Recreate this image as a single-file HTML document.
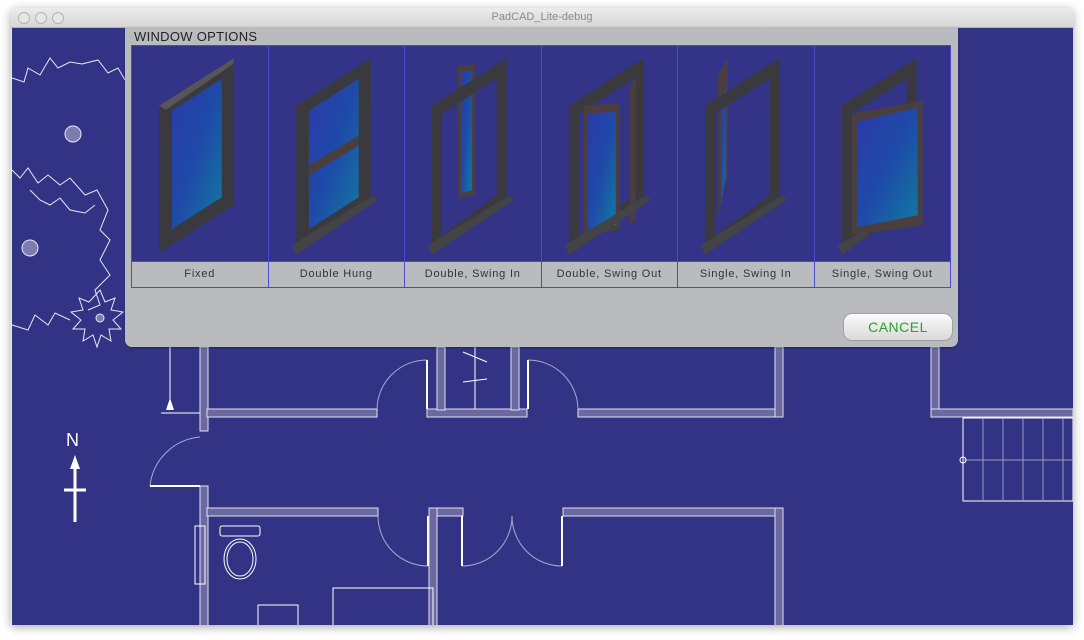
<!DOCTYPE html>
<html><head><meta charset="utf-8"><style>
html,body{margin:0;padding:0;background:#fff;width:1084px;height:640px;overflow:hidden;font-family:"Liberation Sans",sans-serif}
#win{position:absolute;left:11px;top:8px;width:1062px;height:617px;background:#e8e8e8;box-shadow:0 2px 10px rgba(0,0,0,.35);border-radius:5px 5px 0 0;overflow:hidden}
#tb{height:19px;background:linear-gradient(#ececec,#d6d6d6);border-bottom:1px solid #b0b0b0;text-align:center;font-size:11px;line-height:19px;color:#8a8a8a}
.dot{position:absolute;top:4px;width:10px;height:10px;border-radius:50%;border:1px solid #b4b4b4;background:#e6e6e6}
#plan{position:absolute;left:1px;top:20px}
#dlg{position:absolute;left:125px;top:27px;width:833px;height:320px;background:#b9bbbf;border-radius:0 0 7px 7px;box-shadow:0 1px 2px rgba(0,0,0,.3)}
#ttl{position:absolute;left:9px;top:2px;font-size:13px;color:#222;letter-spacing:.3px}
#grid{position:absolute;left:6px;top:18px;width:820px;height:243px;border:1px solid #4a4ad0;box-sizing:border-box;display:flex}
.cell{flex:1 1 0;min-width:0;border-left:1px solid #4a4ad0;display:flex;flex-direction:column;overflow:hidden}
.cell:first-child{border-left:none}
.img{display:block;width:100%;height:216px;background:#333388;border-bottom:1px solid #4a4ad0}
.lbl{flex:1;text-align:center;font-size:11px;line-height:25px;color:#333;letter-spacing:.8px;white-space:nowrap}
#cancel{position:absolute;left:718px;top:286px;width:108px;height:26px;border-radius:9px;border:1px solid #a0a0a0;background:linear-gradient(#fbfbfb,#d9d9d9);color:#2aa02a;font-size:14px;text-align:center;line-height:26px;letter-spacing:.5px}
</style></head><body>
<div id="win">
<div id="tb">PadCAD_Lite-debug</div>
<div class="dot" style="left:7px"></div><div class="dot" style="left:24px"></div><div class="dot" style="left:41px"></div>
<svg id="plan" width="1061" height="597" viewBox="12 28 1061 597">
<rect x="12" y="28" width="1061" height="597" fill="#333386"/>
<g fill="none" stroke="#e8e8f8" stroke-width="1">
<path d="M12,78 L24,82 L28,68 L40,75 L50,58 L58,68 L70,62 L82,64 L98,60 L108,73 L118,68 L125,80"/>
<path d="M12,170 L20,178 L28,168 L38,183 L48,175 L60,185 L70,178 L85,195 L97,190 L108,210 L100,230 L110,240 L100,260 L110,275 L95,290 L100,305 L88,310"/>
<path d="M12,325 L28,330 L35,315 L48,325 L55,313 L70,320"/>
<path d="M30,190 L40,200 L50,205 L60,198 L70,210 L85,213 L95,205"/>
<circle cx="73" cy="134" r="8" fill="#7c7cae"/>
<circle cx="30" cy="248" r="8" fill="#7c7cae"/>
<path d="M100,290 l5,12 l10,-4 l-4,12 l12,2 l-10,8 l8,9 l-12,0 l2,12 l-10,-6 l-4,12 l-4,-12 l-10,6 l2,-12 l-12,0 l8,-9 l-10,-8 l12,-2 l-4,-12 l10,4 z"/>
<circle cx="100" cy="318" r="4" fill="#7c7cae"/>
</g>
<g fill="#6b6aa0" stroke="#e0e0f0" stroke-width="1">
<rect x="200" y="347" width="8" height="84"/>
<rect x="200" y="486" width="8" height="140"/>
<rect x="207" y="409" width="170" height="8"/>
<rect x="427" y="409" width="100" height="8"/>
<rect x="437" y="347" width="8" height="63"/>
<rect x="511" y="347" width="8" height="63"/>
<rect x="578" y="409" width="205" height="8"/>
<rect x="775" y="347" width="8" height="70"/>
<rect x="931" y="347" width="8" height="70"/>
<rect x="931" y="409" width="142" height="8"/>
<rect x="207" y="508" width="171" height="8"/>
<rect x="429" y="508" width="34" height="8"/>
<rect x="563" y="508" width="220" height="8"/>
<rect x="429" y="508" width="8" height="118"/>
<rect x="775" y="508" width="8" height="118"/>
</g>
<g fill="none" stroke="#a8a8d0" stroke-width="1">
<path d="M377,409 A50,50 0 0 1 427,360"/>
<path d="M528,360 A50,50 0 0 1 578,409"/>
<path d="M150,486 A55,55 0 0 1 200,437"/>
<path d="M378,516 A50,50 0 0 0 428,566"/>
<path d="M462,566 A50,50 0 0 0 512,516 A50,50 0 0 0 562,566"/>
</g>
<g stroke="#fff" stroke-width="2" fill="none">
<path d="M427,360 V409 M528,360 V409 M150,486 H200 M428,516 V566 M462,516 V566 M562,516 V566"/>
</g>
<g stroke="#fff" stroke-width="1" fill="none">
<path d="M170,347 V410 M161,413 H200" />
<path d="M463,352 L487,362 M463,382 L487,379 M475,347 V409"/>
<rect x="963" y="418" width="110" height="83"/>
<path d="M983,418 V501 M1003,418 V501 M1023,418 V501 M1043,418 V501 M1063,418 V501 M963,460 H1073" stroke="#9a9ac8"/>
<circle cx="963" cy="460" r="3"/>
<rect x="220" y="526" width="40" height="10" rx="2"/>
<ellipse cx="240" cy="559" rx="16" ry="20"/><ellipse cx="240" cy="559" rx="13" ry="17"/>
<rect x="195" y="526" width="10" height="58"/>
<rect x="333" y="588" width="100" height="40"/>
<rect x="258" y="605" width="40" height="25"/>
</g>
<path d="M170,398 l-4,12 h8 z" fill="#fff"/>
<text x="66" y="446" fill="#fff" font-size="18" font-family="Liberation Sans,sans-serif">N</text>
<path d="M75,455 l-5,14 h10 z" fill="#fff"/>
<path d="M75,465 V522 M64,490 H86" stroke="#fff" stroke-width="3"/>
</svg>
</div>
<svg width="0" height="0" style="position:absolute">
<defs>
<linearGradient id="gl" x1="0" y1="0" x2="1" y2="1"><stop offset="0" stop-color="#2b3aa8"/><stop offset=".5" stop-color="#1e4aa8"/><stop offset="1" stop-color="#127aa0"/></linearGradient>
</defs>
</svg>
<div id="dlg">
<div id="ttl">WINDOW OPTIONS</div>
<div id="grid">
<div class="cell"><svg class="img" viewBox="0 0 136 216">
<path d="M27,60 L102,12 L102,160 L27,208 Z" fill="#3a3a3e"/>
<path d="M40,65 L90,33 L90,152 L40,184 Z" fill="url(#gl)"/>
<path d="M27,60 L95,17 L102,12 L102,18 L34,64 Z" fill="#55555a"/>
</svg><div class="lbl">Fixed</div></div>
<div class="cell"><svg class="img" viewBox="0 0 136 216">
<path d="M27,60 L102,12 L102,160 L27,208 Z" fill="#3a3a3e"/>
<path d="M40,65 L90,33 L90,152 L40,184 Z" fill="url(#gl)"/>
<path d="M40,120 L90,90 L90,100 L40,130 Z" fill="#4a3e3e"/>
<path d="M23,200 L105,150 L109,155 L27,210 Z" fill="#444448"/>
</svg><div class="lbl">Double Hung</div></div>
<div class="cell"><svg class="img" viewBox="0 0 136 216">
<path d="M53,20 L70,18 L70,150 L53,153 Z" fill="#4a3e3e"/>
<path d="M56,26 L67,24 L67,145 L56,148 Z" fill="url(#gl)"/>
<path d="M27,60 L102,12 L102,160 L27,208 Z M37,68 L92,33 L92,150 L37,190 Z" fill="#3a3a3e" fill-rule="evenodd"/>
<path d="M23,200 L105,150 L109,155 L27,210 Z" fill="#444448"/>
</svg><div class="lbl">Double, Swing In</div></div>
<div class="cell"><svg class="img" viewBox="0 0 136 216">
<path d="M27,60 L102,12 L102,160 L27,208 Z M37,68 L92,33 L92,150 L37,190 Z" fill="#3a3a3e" fill-rule="evenodd"/>
<path d="M42,60 L78,57 L78,185 L42,190 Z" fill="#4a3e3e"/>
<path d="M46,68 L74,66 L74,180 L46,184 Z" fill="url(#gl)"/>
<path d="M88,40 L94,32 L94,175 L88,180 Z" fill="#4a3e3e"/>
<path d="M23,200 L105,150 L109,155 L27,210 Z" fill="#444448"/>
</svg><div class="lbl">Double, Swing Out</div></div>
<div class="cell"><svg class="img" viewBox="0 0 136 216">
<path d="M40,30 L50,12 L50,130 L40,170 Z" fill="#4a3e3e"/>
<path d="M43,60 L48,40 L48,130 L43,160 Z" fill="url(#gl)"/>
<path d="M27,60 L102,12 L102,160 L27,208 Z M37,68 L92,33 L92,150 L37,190 Z" fill="#3a3a3e" fill-rule="evenodd"/>
<path d="M23,200 L105,150 L109,155 L27,210 Z" fill="#444448"/>
</svg><div class="lbl">Single, Swing In</div></div>
<div class="cell"><svg class="img" viewBox="0 0 136 216">
<path d="M27,60 L102,12 L102,160 L27,208 Z M37,68 L92,33 L92,150 L37,190 Z" fill="#3a3a3e" fill-rule="evenodd"/>
<path d="M37,68 L108,55 L108,180 L37,190 Z" fill="#4a3e3e"/>
<path d="M42,76 L103,62 L103,170 L42,182 Z" fill="url(#gl)"/>
<path d="M23,200 L50,185 L54,190 L27,210 Z" fill="#444448"/>
</svg><div class="lbl">Single, Swing Out</div></div>
</div>
<div id="cancel">CANCEL</div>
</div>
</body></html>
